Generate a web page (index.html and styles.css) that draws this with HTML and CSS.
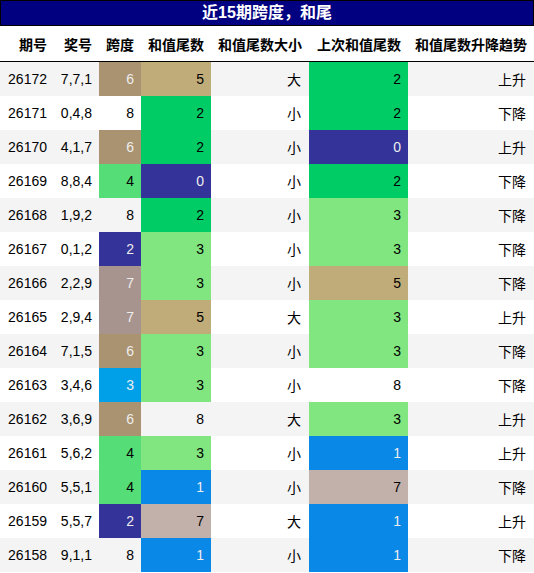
FILE: index.html
```html
<!DOCTYPE html>
<html lang="zh">
<head>
  <meta charset="UTF-8">
  <title>近15期跨度，和尾</title>
  <link rel="stylesheet" href="styles.css">
</head>
<body>
  <div class="title">近15期跨度，和尾</div>
  <table class="trend">
    <colgroup>
      <col class="c-issue"><col class="c-num"><col class="c-span"><col class="c-tail">
      <col class="c-size"><col class="c-last"><col class="c-trend">
    </colgroup>
    <thead>
      <tr>
        <th>期号</th><th>奖号</th><th>跨度</th><th>和值尾数</th>
        <th>和值尾数大小</th><th>上次和值尾数</th><th>和值尾数升降趋势</th>
      </tr>
    </thead>
    <tbody>
      <tr><td>26172</td><td>7,7,1</td><td class="s6">6</td><td class="t5">5</td><td class="cn">大</td><td class="t2">2</td><td class="cn">上升</td></tr>
      <tr><td>26171</td><td>0,4,8</td><td>8</td><td class="t2">2</td><td class="cn">小</td><td class="t2">2</td><td class="cn">下降</td></tr>
      <tr><td>26170</td><td>4,1,7</td><td class="s6">6</td><td class="t2">2</td><td class="cn">小</td><td class="t0">0</td><td class="cn">上升</td></tr>
      <tr><td>26169</td><td>8,8,4</td><td class="s4">4</td><td class="t0">0</td><td class="cn">小</td><td class="t2">2</td><td class="cn">下降</td></tr>
      <tr><td>26168</td><td>1,9,2</td><td>8</td><td class="t2">2</td><td class="cn">小</td><td class="t3">3</td><td class="cn">下降</td></tr>
      <tr><td>26167</td><td>0,1,2</td><td class="s2">2</td><td class="t3">3</td><td class="cn">小</td><td class="t3">3</td><td class="cn">下降</td></tr>
      <tr><td>26166</td><td>2,2,9</td><td class="s7">7</td><td class="t3">3</td><td class="cn">小</td><td class="t5">5</td><td class="cn">下降</td></tr>
      <tr><td>26165</td><td>2,9,4</td><td class="s7">7</td><td class="t5">5</td><td class="cn">大</td><td class="t3">3</td><td class="cn">上升</td></tr>
      <tr><td>26164</td><td>7,1,5</td><td class="s6">6</td><td class="t3">3</td><td class="cn">小</td><td class="t3">3</td><td class="cn">下降</td></tr>
      <tr><td>26163</td><td>3,4,6</td><td class="s3">3</td><td class="t3">3</td><td class="cn">小</td><td>8</td><td class="cn">下降</td></tr>
      <tr><td>26162</td><td>3,6,9</td><td class="s6">6</td><td>8</td><td class="cn">大</td><td class="t3">3</td><td class="cn">上升</td></tr>
      <tr><td>26161</td><td>5,6,2</td><td class="s4">4</td><td class="t3">3</td><td class="cn">小</td><td class="t1">1</td><td class="cn">上升</td></tr>
      <tr><td>26160</td><td>5,5,1</td><td class="s4">4</td><td class="t1">1</td><td class="cn">小</td><td class="t7">7</td><td class="cn">下降</td></tr>
      <tr><td>26159</td><td>5,5,7</td><td class="s2">2</td><td class="t7">7</td><td class="cn">大</td><td class="t1">1</td><td class="cn">上升</td></tr>
      <tr><td>26158</td><td>9,1,1</td><td>8</td><td class="t1">1</td><td class="cn">小</td><td class="t1">1</td><td class="cn">下降</td></tr>
    </tbody>
  </table>
</body>
</html>
```

FILE: styles.css
```css
body {
  margin: 0;
  background: #ffffff;
  font-family: "Liberation Sans", "Noto Sans CJK SC", sans-serif;
  color: #000000;
}
.title {
  height: 24px;
  line-height: 24px;
  background: #000080;
  border: 1px solid #000000;
  color: #ffffff;
  font-size: 16px;
  font-weight: bold;
  text-align: center;
}
.trend {
  width: 534px;
  border-collapse: collapse;
  table-layout: fixed;
  font-size: 14px;
}
.c-issue { width: 54px; }
.c-num { width: 45px; }
.c-span { width: 42px; }
.c-tail { width: 70px; }
.c-size { width: 98px; }
.c-last { width: 99px; }
.c-trend { width: 126px; }

th {
  height: 35px;
  padding: 0 7px 0 0;
  text-align: right;
  font-weight: bold;
  border-bottom: 1px solid #000000;
}
td {
  height: 34px;
  padding: 0 7px 0 0;
  text-align: right;
}
tbody tr:nth-child(odd) { background: #f4f4f4; }
tbody tr:nth-child(even) { background: #ffffff; }
.cn { padding-right: 8px; }

/* 跨度 */
.s6 { background: #a99370; color: #eeeeee; }
.s4 { background: #55dd77; }
.s2 { background: #333399; color: #eeeeee; }
.s7 { background: #a8948e; color: #eeeeee; }
.s3 { background: #00a0e8; color: #eeeeee; }

/* 和值尾数 / 上次 */
.t5 { background: #c0ac78; }
.t2 { background: #00cc66; }
.t0 { background: #333399; color: #eeeeee; }
.t3 { background: #82e680; }
.t1 { background: #0a88e8; color: #eeeeee; }
.t7 { background: #c2b0ab; }
```
